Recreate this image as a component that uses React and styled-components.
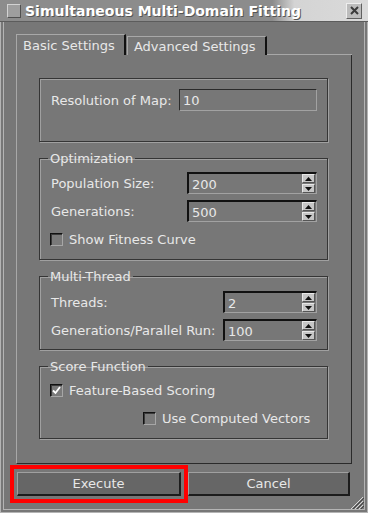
import React from 'react';
import styled, { createGlobalStyle } from 'styled-components';

const GlobalStyle = createGlobalStyle`
  html, body {
    margin: 0;
    padding: 0;
    background: #777777;
  }
  body {
    font-family: "DejaVu Sans", "Liberation Sans", sans-serif;
    font-size: 13px;
    color: #e8e8e8;
  }
`;

const Window = styled.div`
  position: relative;
  width: 368px;
  height: 513px;
  display: flex;
  flex-direction: column;
  background: #777777;
  box-sizing: border-box;
  overflow: hidden;
`;

const TitleBar = styled.div`
  flex: none;
  height: 21px;
  display: flex;
  align-items: center;
  padding: 0 6px 0 7px;
  background: linear-gradient(to right, #8c8c8c 0%, #8c8c8c 74%, #d4d4d4 80%, #dadada 100%);
  border-bottom: 1px solid #5c5c5c;
`;

const TitleIcon = styled.div`
  width: 14px;
  height: 14px;
  box-sizing: border-box;
  background: #9e9e9e;
  border-top: 1px solid #d2d2d2;
  border-left: 1px solid #d2d2d2;
  border-bottom: 1px solid #505050;
  border-right: 1px solid #505050;
`;

const TitleText = styled.div`
  flex: 1;
  margin-left: 4px;
  font-weight: bold;
  font-size: 14px;
  color: #ffffff;
  text-shadow: 1px 1px 0 #555;
  white-space: nowrap;
`;

const CloseButton = styled.div`
  width: 16px;
  height: 16px;
  box-sizing: border-box;
  display: flex;
  align-items: center;
  justify-content: center;
  background: #bcbcbc;
  border-top: 1px solid #eeeeee;
  border-left: 1px solid #eeeeee;
  border-bottom: 1px solid #606060;
  border-right: 1px solid #606060;
`;

const Frame = styled.div`
  flex: 1;
  display: flex;
  flex-direction: column;
  padding: 12px 12px 13px 12px;
  border: 4px double #b4b4b4;
  border-top: none;
`;

const TabBar = styled.div`
  display: flex;
  align-items: flex-end;
  height: 21px;
`;

const Tab = styled.div`
  height: ${p => (p.$active ? '21px' : '19px')};
  margin-left: ${p => (p.$active ? '0' : '1px')};
  box-sizing: border-box;
  display: flex;
  align-items: center;
  padding: 0 9px 0 6px;
  border-top: 1px solid #a8a8a8;
  border-left: 1px solid #a8a8a8;
  border-right: 2px solid #111111;
  white-space: nowrap;
`;

const TabFiller = styled.div`
  flex: 1;
  height: 1px;
  background: #a8a8a8;
`;

const Pane = styled.div`
  display: flex;
  flex-direction: column;
  gap: 9px;
  padding: 23px 23px 24px 22px;
  border-left: 1px solid #a8a8a8;
  border-right: 1px solid #2a2a2a;
  border-bottom: 1px solid #2a2a2a;
`;

const Group = styled.fieldset`
  margin: 0;
  min-width: 0;
  display: flex;
  flex-direction: column;
  padding: ${p => p.$pad};
  border: 1px solid #353535;
  box-shadow: 1px 1px 0 #a0a0a0, inset 1px 1px 0 #a0a0a0;
`;

const Legend = styled.legend`
  margin-left: -2px;
  padding: 0 2px;
  line-height: 15px;
  font-size: 13px;
`;

const FieldRow = styled.div`
  display: flex;
  align-items: center;
  justify-content: space-between;
  height: 22px;
  padding-left: 1px;
  margin-top: ${p => p.$top || '0'};
`;

const TextInput = styled.div`
  width: 138px;
  height: 22px;
  box-sizing: border-box;
  display: flex;
  align-items: center;
  padding-left: 3px;
  border-top: 1px solid #2a2a2a;
  border-left: 1px solid #2a2a2a;
  border-bottom: 1px solid #a2a2a2;
  border-right: 1px solid #a2a2a2;
`;

const SpinBox = styled.div`
  width: ${p => p.$width}px;
  height: 22px;
  box-sizing: border-box;
  display: flex;
  align-items: center;
  border-top: 2px solid #111111;
  border-left: 2px solid #111111;
  border-bottom: 1px solid #a2a2a2;
  border-right: 1px solid #a2a2a2;
`;

const SpinValue = styled.div`
  flex: 1;
  padding-left: 3px;
  padding-top: 1px;
`;

const SpinArrows = styled.div`
  display: flex;
  flex-direction: column;
  gap: 1px;
  margin-right: 1px;
`;

const ArrowButton = styled.div`
  width: 13px;
  height: 9px;
  box-sizing: border-box;
  display: flex;
  align-items: center;
  justify-content: center;
  background: #c6c6c6;
  border-top: 1px solid #e8e8e8;
  border-left: 1px solid #e8e8e8;
  border-bottom: 1px solid #555555;
  border-right: 1px solid #555555;
`;

const CheckRow = styled.div`
  display: flex;
  align-items: center;
  height: 17px;
  margin-top: ${p => p.$top || '0'};
  margin-left: ${p => p.$indent || '0'};
`;

const CheckBox = styled.div`
  width: 13px;
  height: 13px;
  box-sizing: border-box;
  display: flex;
  align-items: center;
  justify-content: center;
  margin-right: 6px;
  background: #7a7a7a;
  border-top: 1px solid #111111;
  border-left: 1px solid #111111;
  border-bottom: 1px solid #a6a6a6;
  border-right: 1px solid #a6a6a6;
  box-shadow: inset 1px 1px 0 #3a3a3a;
`;

const ButtonRow = styled.div`
  display: flex;
  gap: 7px;
  margin-top: 8px;
  padding-left: 1px;
`;

const Button = styled.div`
  width: ${p => p.$width}px;
  height: 24px;
  box-sizing: border-box;
  display: flex;
  align-items: center;
  justify-content: center;
  background: #666666;
  border-top: 1px solid #a0a0a0;
  border-left: 1px solid #a0a0a0;
  border-bottom: 2px solid #1c1c1c;
  border-right: 2px solid #1c1c1c;
  outline: ${p => (p.$highlight ? '4px solid #ff0000' : 'none')};
  outline-offset: 3px;
`;

const Grip = styled.svg`
  position: absolute;
  right: 4px;
  bottom: 4px;
`;

const Arrow = ({ up }) => (
  <svg width="7" height="4" viewBox="0 0 7 4">
    <polygon points={up ? '3.5,0 7,4 0,4' : '0,0 7,0 3.5,4'} fill="#111" />
  </svg>
);

const Spin = ({ value, width }) => (
  <SpinBox $width={width}>
    <SpinValue>{value}</SpinValue>
    <SpinArrows>
      <ArrowButton><Arrow up /></ArrowButton>
      <ArrowButton><Arrow /></ArrowButton>
    </SpinArrows>
  </SpinBox>
);

const Check = ({ checked }) => (
  <CheckBox>
    {checked && (
      <svg width="9" height="9" viewBox="0 0 9 9">
        <path d="M1 4.5 L3.5 7 L8 1" stroke="#ffffff" strokeWidth="1.8" fill="none" />
      </svg>
    )}
  </CheckBox>
);

const App = () => {
  return (
    <Window>
      <GlobalStyle />
      <TitleBar>
        <TitleIcon />
        <TitleText>Simultaneous Multi-Domain Fitting</TitleText>
        <CloseButton>
          <svg width="9" height="9" viewBox="0 0 9 9">
            <path d="M1 1 L8 8 M8 1 L1 8" stroke="#3a3a3a" strokeWidth="2" />
          </svg>
        </CloseButton>
      </TitleBar>
      <Frame>
        <TabBar>
          <Tab $active>Basic Settings</Tab>
          <Tab>Advanced Settings</Tab>
          <TabFiller />
        </TabBar>
        <Pane>
          <Group $pad="10px 10px 30px 10px">
            <FieldRow>
              <span>Resolution of Map:</span>
              <TextInput>10</TextInput>
            </FieldRow>
          </Group>
          <Group $pad="6px 10px 11px 10px">
            <Legend>Optimization</Legend>
            <FieldRow>
              <span>Population Size:</span>
              <Spin value="200" width={130} />
            </FieldRow>
            <FieldRow $top="6px">
              <span>Generations:</span>
              <Spin value="500" width={130} />
            </FieldRow>
            <CheckRow $top="9px">
              <Check />
              <span>Show Fitness Curve</span>
            </CheckRow>
          </Group>
          <Group $pad="7px 10px 8px 10px">
            <Legend>Multi-Thread</Legend>
            <FieldRow>
              <span>Threads:</span>
              <Spin value="2" width={94} />
            </FieldRow>
            <FieldRow $top="6px">
              <span>Generations/Parallel Run:</span>
              <Spin value="100" width={94} />
            </FieldRow>
          </Group>
          <Group $pad="8px 10px 11px 10px">
            <Legend>Score Function</Legend>
            <CheckRow>
              <Check checked />
              <span>Feature-Based Scoring</span>
            </CheckRow>
            <CheckRow $top="11px" $indent="93px">
              <Check />
              <span>Use Computed Vectors</span>
            </CheckRow>
          </Group>
        </Pane>
        <ButtonRow>
          <Button $width={164} $highlight>Execute</Button>
          <Button $width={162}>Cancel</Button>
        </ButtonRow>
      </Frame>
      <Grip width="14" height="13" viewBox="0 0 14 13">
        <path d="M13 1 L1 13 M13 5 L5 13 M13 9 L9 13" stroke="#d8d8d8" strokeWidth="1" />
        <path d="M14 2 L2 14 M14 6 L6 14 M14 10 L10 14" stroke="#444" strokeWidth="1" />
      </Grip>
    </Window>
  );
};

export default App;
